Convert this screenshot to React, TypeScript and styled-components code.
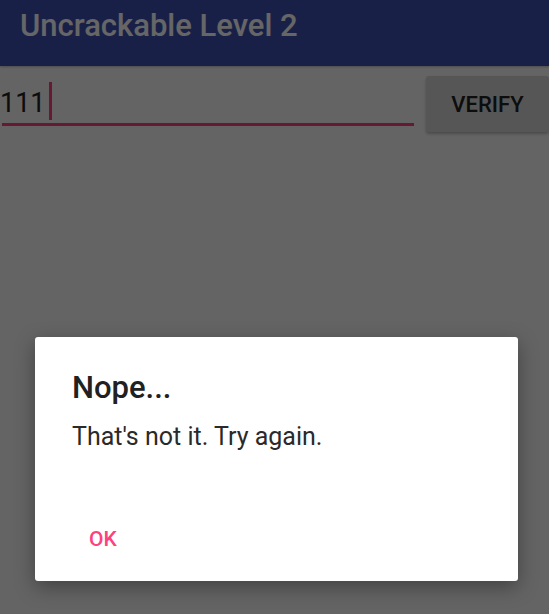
import * as React from 'react';
import styled, { createGlobalStyle } from 'styled-components';

const accent = '#FF4081';

const GlobalStyle = createGlobalStyle`
  html, body {
    margin: 0;
    padding: 0;
    background: #fafafa;
    font-family: Roboto, "Noto Sans", "Liberation Sans", sans-serif;
  }
  #root {
    height: 614px;
  }
`;

const Screen = styled.div`
  position: relative;
  height: 614px;
  overflow: hidden;
  background: #fafafa;
`;

const AppBar = styled.header`
  box-sizing: border-box;
  height: 66px;
  padding: 8px 0 0 20px;
  background: #3f51b5;
  box-shadow: 0 1px 2px rgba(0, 0, 0, 0.25);
`;

const Title = styled.h1`
  margin: 0;
  font-size: 31px;
  line-height: 36px;
  font-weight: 500;
  color: #ffffff;
`;

const FormRow = styled.div`
  display: flex;
  align-items: flex-start;
  padding: 10px 0 0 2px;
`;

const Field = styled.div`
  flex: 1;
  display: flex;
  align-items: flex-end;
  height: 47px;
  margin-right: 12px;
  border-bottom: 3px solid ${accent};
`;

const Value = styled.span`
  margin: 0 0 4px -2px;
  font-size: 27px;
  line-height: 32px;
  color: #212121;
`;

const Caret = styled.span`
  width: 3px;
  height: 38px;
  margin: 0 0 3px 3px;
  background: ${accent};
`;

const RaisedButton = styled.button`
  width: 123px;
  height: 56px;
  border: none;
  border-radius: 3px;
  background: #d6d7d7;
  box-shadow: 0 2px 3px rgba(0, 0, 0, 0.25);
  font-family: inherit;
  font-size: 22px;
  font-weight: 500;
  color: #212121;
  padding: 0;
`;

const Scrim = styled.div`
  position: absolute;
  inset: 0;
  display: flex;
  justify-content: flex-start;
  align-items: flex-start;
  padding: 337px 0 0 35px;
  background: rgba(0, 0, 0, 0.6);
`;

const Dialog = styled.div`
  box-sizing: border-box;
  width: 483px;
  height: 244px;
  padding: 33px 0 0;
  border-radius: 3px;
  background: #ffffff;
  box-shadow: 0 6px 20px rgba(0, 0, 0, 0.35);
`;

const DialogTitle = styled.h2`
  margin: 0 36px 0 37px;
  font-size: 31px;
  line-height: 36px;
  font-weight: 500;
  color: #212121;
`;

const Message = styled.p`
  margin: 15px 36px 0 37px;
  font-size: 25px;
  line-height: 32px;
  color: #2a2a2a;
`;

const Actions = styled.div`
  display: flex;
  margin-top: 59px;
  padding: 0 38px;
`;

const TextButton = styled.button`
  height: 54px;
  padding: 0 16px;
  border: none;
  background: transparent;
  font-family: inherit;
  font-size: 21px;
  line-height: 54px;
  font-weight: 500;
  color: ${accent};
`;

export default function App() {
  return (
    <>
      <GlobalStyle />
      <Screen>
        <AppBar>
          <Title>Uncrackable Level 2</Title>
        </AppBar>
        <FormRow>
          <Field>
            <Value>111</Value>
            <Caret />
          </Field>
          <RaisedButton>VERIFY</RaisedButton>
        </FormRow>
        <Scrim>
          <Dialog>
            <DialogTitle>Nope...</DialogTitle>
            <Message>That's not it. Try again.</Message>
            <Actions>
              <TextButton>OK</TextButton>
            </Actions>
          </Dialog>
        </Scrim>
      </Screen>
    </>
  );
}
